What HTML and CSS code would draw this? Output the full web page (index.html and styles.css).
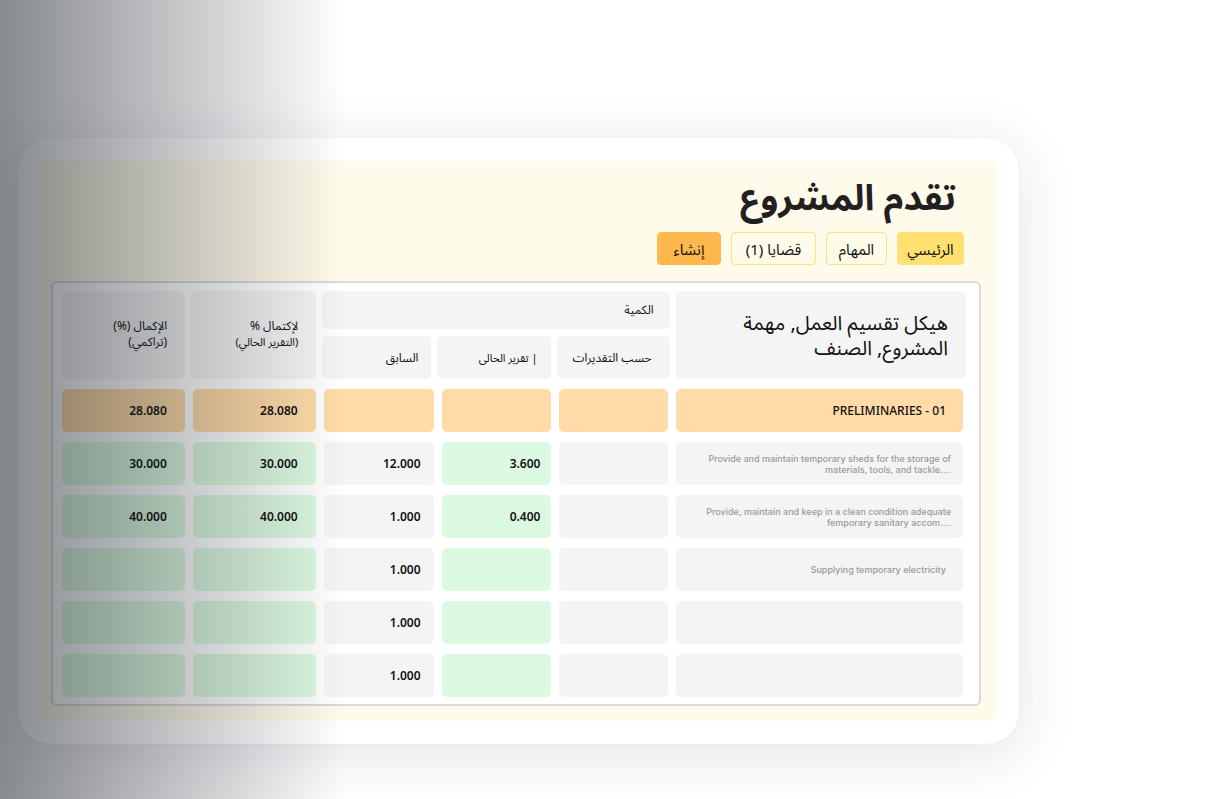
FILE: index.html
```
<!DOCTYPE html>
<html lang="ar" dir="rtl">
<head>
    <meta charset="UTF-8">
    <meta name="viewport" content="width=device-width, initial-scale=1.0">
    <title>تقدم المشروع</title>
    <link rel="stylesheet" href="styles.css">
</head>
<body>
    <main class="card">
        <section class="panel">
            <header class="panel-header">
                <h1>تقدم المشروع</h1>
                <nav class="tabs">
                    <button type="button" class="tab tab-active">الرئيسي</button>
                    <button type="button" class="tab">المهام</button>
                    <button type="button" class="tab tab-wide">قضايا (1)</button>
                    <button type="button" class="tab tab-create">إنشاء</button>
                </nav>
            </header>
            <table class="progress">
                <thead>
                    <tr>
                        <th class="head-item" rowspan="2">هيكل تقسيم العمل, مهمة المشروع, الصنف</th>
                        <th class="head-quantity" colspan="3">الكمية</th>
                        <th class="head-tall" rowspan="2">لإكتمال %<br><small>(التقرير الحالي)</small></th>
                        <th class="head-tall" rowspan="2">الإكمال (%)<br>(تراكمي)</th>
                    </tr>
                    <tr>
                        <th class="head-estimate">حسب التقديرات</th>
                        <th class="head-current">| تقرير الحالى</th>
                        <th class="head-previous">السابق</th>
                    </tr>
                </thead>
                <tbody>
                    <tr class="group">
                        <td class="name" dir="ltr">PRELIMINARIES - 01</td>
                        <td></td>
                        <td></td>
                        <td></td>
                        <td class="total">28.080</td>
                        <td class="total">28.080</td>
                    </tr>
                    <tr>
                        <td class="note" dir="ltr">Provide and maintain temporary sheds for the storage of materials, tools, and tackle....</td>
                        <td></td>
                        <td class="done">3.600</td>
                        <td>12.000</td>
                        <td class="done total">30.000</td>
                        <td class="done total">30.000</td>
                    </tr>
                    <tr>
                        <td class="note" dir="ltr">Provide, maintain and keep in a clean condition adequate femporary sanitary accom....</td>
                        <td></td>
                        <td class="done">0.400</td>
                        <td>1.000</td>
                        <td class="done total">40.000</td>
                        <td class="done total">40.000</td>
                    </tr>
                    <tr>
                        <td class="note note-short" dir="ltr">Supplying temporary electricity</td>
                        <td></td>
                        <td class="done"></td>
                        <td>1.000</td>
                        <td class="done"></td>
                        <td class="done"></td>
                    </tr>
                    <tr>
                        <td></td>
                        <td></td>
                        <td class="done"></td>
                        <td>1.000</td>
                        <td class="done"></td>
                        <td class="done"></td>
                    </tr>
                    <tr>
                        <td></td>
                        <td></td>
                        <td class="done"></td>
                        <td>1.000</td>
                        <td class="done"></td>
                        <td class="done"></td>
                    </tr>
                </tbody>
            </table>
        </section>
    </main>
    <div class="shade"></div>
</body>
</html>
```
FILE: styles.css
```
* {
    box-sizing: border-box;
}

body {
    min-height: 100vh;
    margin: 0;
    padding: 138px 203px 0 18px;
    background: #fff;
    color: #111;
    font-family: "Noto Sans", "Noto Sans Arabic", "DejaVu Sans", sans-serif;
}

.card {
    padding: 23px 22px 23px 20px;
    border-radius: 32px;
    background: #fff;
    box-shadow: 0 10px 60px rgba(30, 35, 70, .12), 0 0 1px rgba(30, 35, 70, .15);
}

.panel {
    padding: 14px 16px 15px 13px;
    border-radius: 8px;
    background: #fffbea;
}

.panel-header {
    padding: 0 17px 16px;
}

h1 {
    margin: 0;
    padding-right: 8px;
    color: #231f20;
    font-size: 36px;
    line-height: 44px;
}

.tabs {
    display: flex;
    gap: 10px;
    margin-top: 13px;
}

.tab {
    min-width: 61px;
    height: 33px;
    padding: 0 9px;
    border: 1px solid #ffe17c;
    border-radius: 4px;
    background: transparent;
    color: #111;
    font: inherit;
    font-size: 15px;
    line-height: 20px;
}

.tab-active {
    min-width: 67px;
    border-color: #ffe071;
    background: #ffe071;
}

.tab-wide {
    min-width: 85px;
}

.tab-create {
    min-width: 64px;
    border-color: #ffb84d;
    background: #ffb84d;
}

.progress {
    display: block;
    padding: 8px 13px 7px 9px;
    border: 2px solid #d9dade;
    border-radius: 6px;
    background: #fff;
}

thead,
tbody {
    display: grid;
}

/* rows only group the cells, the grid places them */
tr {
    display: contents;
}

thead {
    grid-template-columns: 290fr 113fr 113fr 109fr 125fr 123fr;
    grid-template-rows: 38px 43px;
    gap: 7px 6px;
    margin-bottom: 10px;
}

tbody {
    grid-template-columns: 287fr 109fr 110fr 110fr 123fr 123fr;
    grid-auto-rows: 43px;
    gap: 10px 8px;
    padding-right: 3px;
}

th,
td {
    display: flex;
    align-items: center;
    min-width: 0;
    padding: 0 13px;
    border-radius: 5px;
    background: #f4f4f4;
}

th {
    font-size: 12px;
    font-weight: 400;
    line-height: 16px;
    text-align: right;
}

th small {
    font-size: 11px;
}

.head-item {
    grid-area: 1 / 1 / 3 / 2;
    padding: 0 18px;
    font-size: 20px;
    line-height: 25px;
}

.head-quantity {
    grid-column: 2 / 5;
    padding: 0 16px;
}

.head-tall {
    display: block;
    grid-row: 1 / 3;
    padding: 27px 18px;
}

.head-estimate {
    grid-area: 2 / 2;
    padding: 0 18px 0 8px;
}

.head-current {
    grid-area: 2 / 3;
    font-size: 11px;
}

.head-previous {
    grid-area: 2 / 4;
}

td {
    font-size: 12px;
    font-weight: 600;
}

.total {
    padding: 0 18px;
}

.group td {
    background: #ffdba8;
}

tbody .done {
    padding-right: 11px;
    background: #dcf9e1;
}

tbody .total {
    padding-right: 18px;
}

.name,
.note {
    justify-content: flex-end;
    text-align: right;
}

.name {
    padding: 0 17px;
    font-weight: 500;
}

.note {
    padding: 0 12px 0 24px;
    color: #999;
    font-family: Inter, "Noto Sans", sans-serif;
    font-size: 9px;
    font-weight: 500;
    line-height: 11px;
}

.note-short {
    padding-right: 17px;
}

/* dark fade over the left side of the page */
.shade {
    position: absolute;
    top: 0;
    bottom: 0;
    left: 0;
    width: 345px;
    background: linear-gradient(to right, rgba(15, 21, 30, .5), rgba(15, 21, 30, 0));
    pointer-events: none;
}
```
